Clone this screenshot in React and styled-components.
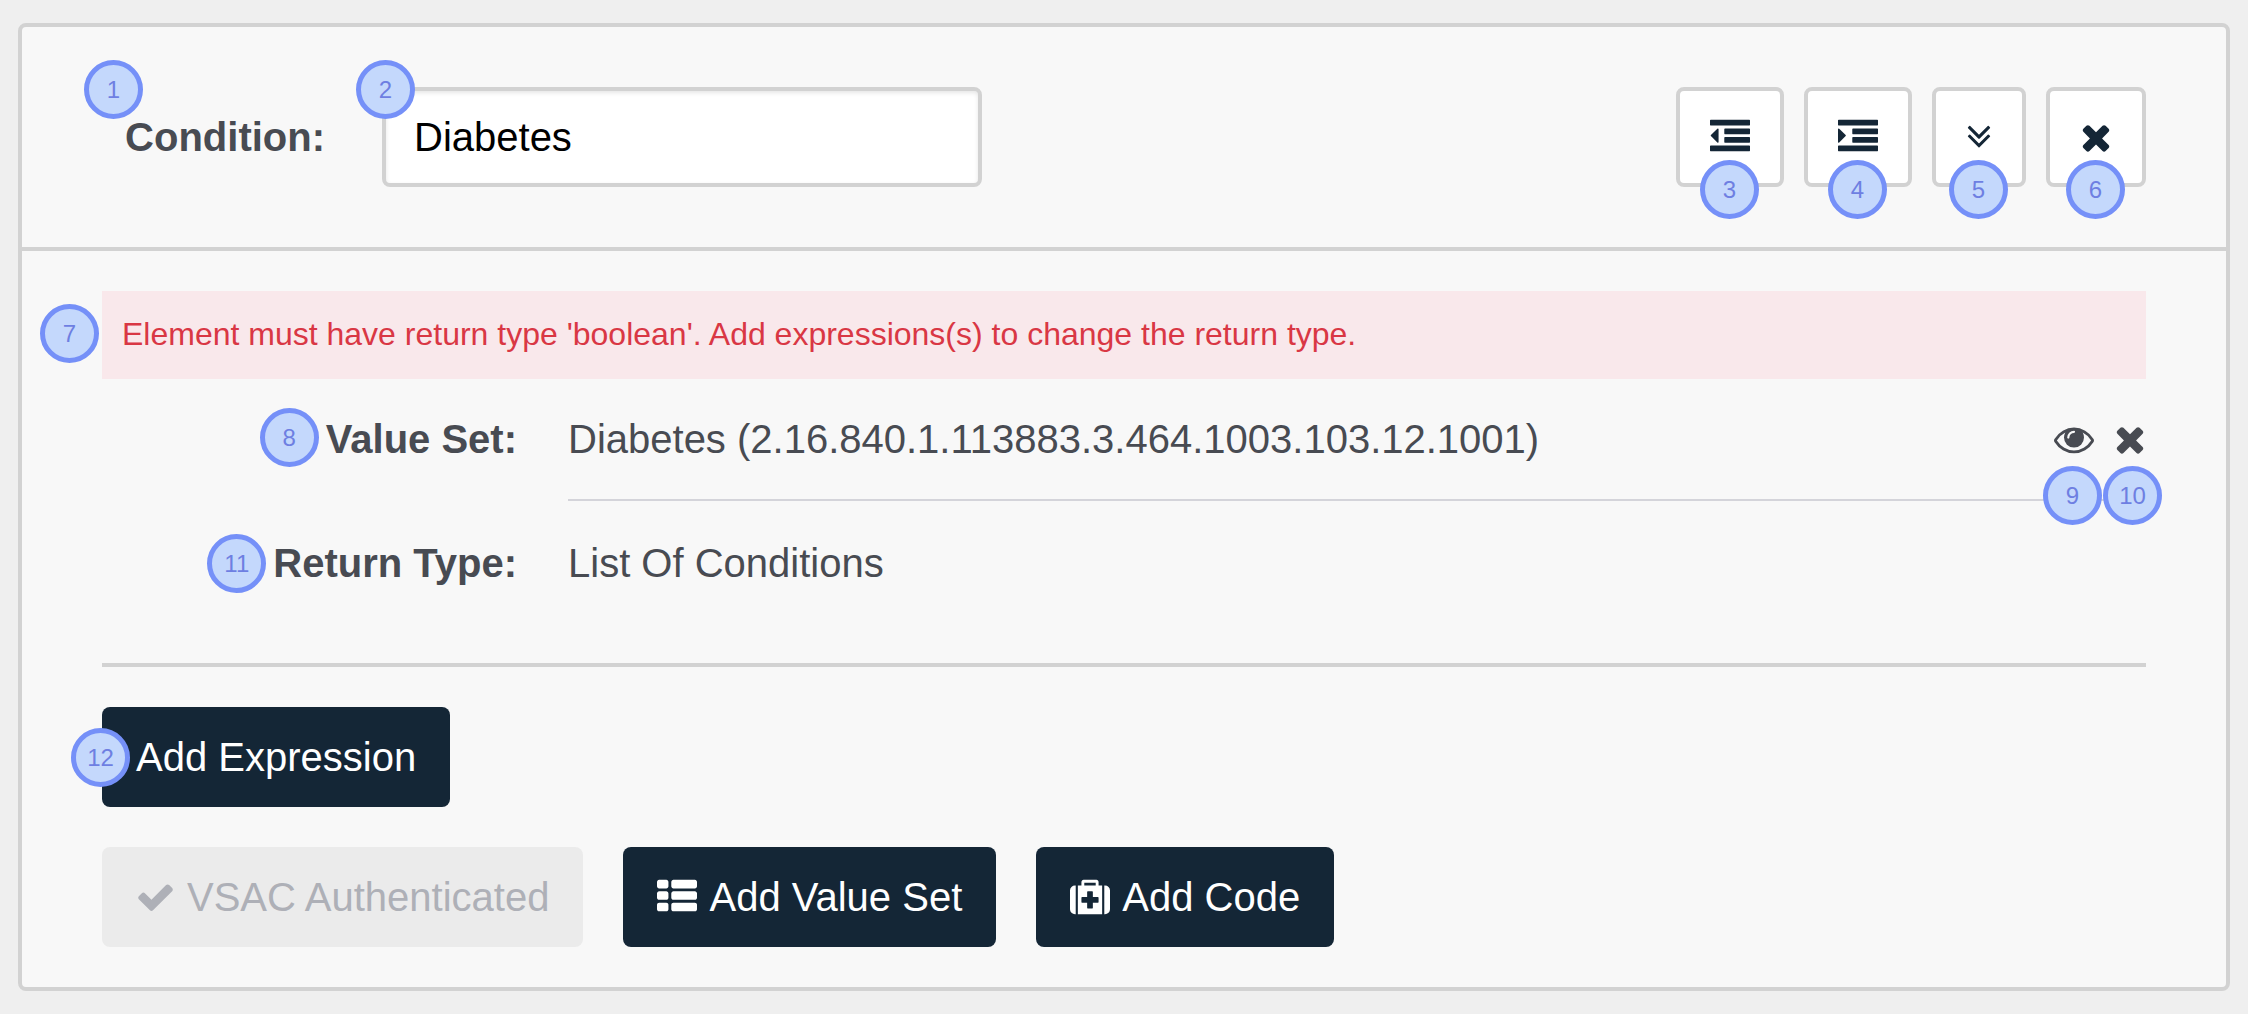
import React, { useState } from "react";
import styled, { createGlobalStyle } from "styled-components";

const color = {
  page: "#efefef",
  card: "#f8f8f8",
  line: "#d2d2d2",
  hairline: "#d4d4da",
  text: "#484b52",
  dark: "#142636",
  danger: "#d93744",
  dangerSoft: "#f9e8eb",
  disabled: "#ebebeb",
  disabledText: "#aeb0b7",
};

const GlobalStyle = createGlobalStyle`
  *, *::before, *::after { box-sizing: border-box; }
  body {
    margin: 0;
    background: ${color.page};
    color: ${color.text};
    font-family: "Liberation Sans", Arial, Helvetica, sans-serif;
    font-size: 40px;
    line-height: 46px;
  }
`;

const Page = styled.main`
  padding: 23px 18px;
`;

const Card = styled.section`
  background: ${color.card};
  border: 4px solid ${color.line};
  border-radius: 8px;
`;

const CardHeader = styled.header`
  display: flex;
  align-items: center;
  justify-content: space-between;
  gap: 40px;
  padding: 60px 80px;
  border-bottom: 4px solid ${color.line};
`;

const NameField = styled.div`
  display: flex;
  align-items: center;
  gap: 57px;
`;

const NameLabelCell = styled.div`
  position: relative;
  display: flex;
  align-items: center;
  justify-content: flex-end;
  width: 223px;
  height: 100px;
  font-weight: bold;
`;

const NameInput = styled.input`
  display: block;
  width: 600px;
  height: 100px;
  padding: 0 28px;
  border: 4px solid ${color.line};
  border-radius: 8px;
  background: #fff;
  box-shadow: inset 0 2px 4px rgba(0, 0, 0, 0.1);
  color: #000;
  font: inherit;
`;

const Toolbar = styled.div`
  display: flex;
  gap: 20px;
`;

const Spot = styled.div`
  position: relative;
  display: flex;
`;

const Badge = styled.span`
  position: absolute;
  left: ${(p) => p.$x};
  top: ${(p) => p.$y};
  z-index: 1;
  display: flex;
  align-items: center;
  justify-content: center;
  width: 59px;
  height: 59px;
  margin: -29px 0 0 -30px;
  border: 5px solid #7590f8;
  border-radius: 50%;
  background: #c4d8fc;
  color: #6e7fe2;
  font-size: 24px;
  font-weight: normal;
  line-height: 28px;
  pointer-events: none;
`;

const ToolButton = styled.button`
  display: flex;
  align-items: center;
  justify-content: center;
  height: 100px;
  padding: 0 30px;
  border: 4px solid ${color.line};
  border-radius: 8px;
  background: #fff;
  color: ${color.dark};
  cursor: pointer;
`;

const PlainButton = styled.button`
  display: flex;
  padding: 0;
  border: 0;
  background: none;
  color: inherit;
  cursor: pointer;
`;

const CardBody = styled.div`
  padding: 40px 80px;
`;

const Alert = styled.div`
  position: relative;
  padding: 25px 20px 27px;
  background: ${color.dangerSoft};
  color: ${color.danger};
  font-size: 32px;
  line-height: 36px;
`;

const Details = styled.dl`
  display: grid;
  grid-template-columns: 415px 1fr;
  column-gap: 51px;
  row-gap: 4px;
  margin: 0 0 40px;
`;

const Term = styled.dt`
  display: flex;
  justify-content: flex-end;
  padding: 37px 0;
  font-weight: bold;
`;

const Value = styled.dd`
  display: flex;
  align-items: center;
  justify-content: space-between;
  margin: 0;
  padding: 37px 0;
  box-shadow: ${(p) => (p.$ruled ? `0 2px 0 ${color.hairline}` : "none")};
`;

const ValueActions = styled.div`
  display: flex;
  gap: 20px;
`;

const Divider = styled.hr`
  height: 4px;
  margin: 0 0 40px;
  border: 0;
  background: ${color.line};
`;

const Actions = styled.div`
  display: flex;
  flex-wrap: wrap;
  gap: 40px;

  & + & {
    margin-top: 40px;
  }
`;

const ActionButton = styled.button`
  display: flex;
  align-items: center;
  gap: 12px;
  height: 100px;
  padding: 0 34px;
  border: 0;
  border-radius: 8px;
  background: ${color.dark};
  color: #fff;
  font: inherit;
  cursor: pointer;

  &:disabled {
    background: ${color.disabled};
    color: ${color.disabledText};
    cursor: default;
  }
`;

const Glyph = styled.svg`
  display: block;
  flex: none;
  height: 40px;
  width: ${(p) => p.$w}px;
  fill: currentColor;
`;

const bar =
  "v192q0 13-9.5 22.5t-22.5 9.5h-1728q-13 0-22.5-9.5t-9.5-22.5v-192q0-13 9.5-22.5t22.5-9.5h1728q13 0 22.5 9.5t9.5 22.5z";
const shortBar =
  "v192q0 13-9.5 22.5t-22.5 9.5h-1088q-13 0-22.5-9.5t-9.5-22.5v-192q0-13 9.5-22.5t22.5-9.5h1088q13 0 22.5 9.5t9.5 22.5z";
const bars = `M1792 1312${bar}M1792 928${shortBar}M1792 544${shortBar}M1792 160${bar}`;
const chevron =
  "q0 13-10 23l-466 466q-10 10-23 10t-23-10l-466-466q-10-10-10-23t10-23l50-50q10-10 23-10t23 10l393 393 393-393q10-10 23-10t23 10l50 50q10 10 10 23z";

const icons = {
  outdent: {
    w: 40,
    box: "0 0 1792 1792",
    d: `M384 544v576q0 13-9.5 22.5t-22.5 9.5q-14 0-23-9l-288-288q-9-9-9-23t9-23l288-288q9-9 23-9 13 0 22.5 9.5t9.5 22.5z${bars}`,
  },
  indent: {
    w: 40,
    box: "0 0 1792 1792",
    d: `M352 832q0 14-9 23l-288 288q-9 9-23 9-13 0-22.5-9.5t-9.5-22.5v-576q0-13 9.5-22.5t22.5-9.5q14 0 23 9l288 288q9 9 9 23z${bars}`,
  },
  collapse: {
    w: 26,
    box: "314 0 1164 1792",
    d: `M1395 864${chevron}M1395 480${chevron}`,
  },
  times: {
    w: 32,
    box: "179 0 1434 1792",
    d: "M1490 1322q0 40-28 68l-136 136q-28 28-68 28t-68-28l-294-294-294 294q-28 28-68 28t-68-28l-136-136q-28-28-28-68t28-68l294-294-294-294q-28-28-28-68t28-68l136-136q28-28 68-28t68 28l294 294 294-294q28-28 68-28t68 28l136 136q28 28 28 68t-28 68l-294 294 294 294q28 28 28 68z",
  },
  eye: {
    w: 40,
    box: "0 0 1792 1792",
    d: "M1664 960q-152-236-381-353 61 104 61 225 0 185-131.5 316.5t-316.5 131.5-316.5-131.5-131.5-316.5q0-121 61-225-229 117-381 353 133 205 333.5 326.5t434.5 121.5 434.5-121.5 333.5-326.5zm-720-384q0-20-14-34t-34-14q-125 0-214.5 89.5t-89.5 214.5q0 20 14 34t34 14 34-14 14-34q0-86 61-147t147-61q20 0 34-14t14-34zm848 384q0 34-20 69-140 230-376.5 368.5t-499.5 138.5-499.5-139-376.5-368q-20-35-20-69t20-69q140-229 376.5-368t499.5-139 499.5 139 376.5 368q20 35 20 69z",
  },
  check: {
    w: 39,
    box: "22 0 1748 1792",
    d: "M1671 566q0 40-28 68l-724 724-136 136q-28 28-68 28t-68-28l-136-136-362-362q-28-28-28-68t28-68l136-136q28-28 68-28t68 28l294 295 656-657q28-28 68-28t68 28l136 136q28 28 28 68z",
  },
  list: {
    w: 40,
    box: "0 0 1792 1792",
    d: "M512 1248v192q0 40-28 68t-68 28h-320q-40 0-68-28t-28-68v-192q0-40 28-68t68-28h320q40 0 68 28t28 68zm0-512v192q0 40-28 68t-68 28h-320q-40 0-68-28t-28-68v-192q0-40 28-68t68-28h320q40 0 68 28t28 68zm1280 512v192q0 40-28 68t-68 28h-960q-40 0-68-28t-28-68v-192q0-40 28-68t68-28h960q40 0 68 28t28 68zm-1280-1024v192q0 40-28 68t-68 28h-320q-40 0-68-28t-28-68v-192q0-40 28-68t68-28h320q40 0 68 28t28 68zm1280 512v192q0 40-28 68t-68 28h-960q-40 0-68-28t-28-68v-192q0-40 28-68t68-28h960q40 0 68 28t28 68zm0-512v192q0 40-28 68t-68 28h-960q-40 0-68-28t-28-68v-192q0-40 28-68t68-28h960q40 0 68 28t28 68z",
  },
  medkit: {
    w: 40,
    box: "0 0 1792 1792",
    d: "M1280 1120v-192q0-14-9-23t-23-9h-224v-224q0-14-9-23t-23-9h-192q-14 0-23 9t-9 23v224h-224q-14 0-23 9t-9 23v192q0 14 9 23t23 9h224v224q0 14 9 23t23 9h192q14 0 23-9t9-23v-224h224q14 0 23-9t9-23zm-640-736h512v-128h-512v128zm-384 0v1280h-32q-92 0-158-66t-66-158v-832q0-92 66-158t158-66h32zm1184 0v1280h-1088v-1280h160v-160q0-40 28-68t68-28h576q40 0 68 28t28 68v160h160zm352 224v832q0 92-66 158t-158 66h-32v-1280h32q92 0 158 66t66 158z",
  },
};

function Icon({ name }) {
  const { w, box, d } = icons[name];
  return (
    <Glyph $w={w} viewBox={box} aria-hidden="true">
      <path d={d} />
    </Glyph>
  );
}

const tools = [
  { icon: "outdent", label: "Outdent", step: 3 },
  { icon: "indent", label: "Indent", step: 4 },
  { icon: "collapse", label: "Collapse", step: 5 },
  { icon: "times", label: "Remove condition", step: 6 },
];

export default function App() {
  const [name, setName] = useState("Diabetes");

  return (
    <>
      <GlobalStyle />
      <Page>
        <Card>
          <CardHeader>
            <NameField>
              <NameLabelCell>
                <label htmlFor="condition-name">Condition:</label>
                <Badge $x="12px" $y="2px">1</Badge>
              </NameLabelCell>
              <Spot>
                <NameInput
                  id="condition-name"
                  type="text"
                  value={name}
                  onChange={(e) => setName(e.target.value)}
                />
                <Badge $x="4px" $y="2px">2</Badge>
              </Spot>
            </NameField>
            <Toolbar>
              {tools.map(({ icon, label, step }) => (
                <Spot key={icon}>
                  <ToolButton type="button" aria-label={label}>
                    <Icon name={icon} />
                  </ToolButton>
                  <Badge $x="50%" $y="calc(100% + 2px)">{step}</Badge>
                </Spot>
              ))}
            </Toolbar>
          </CardHeader>

          <CardBody>
            <Alert role="alert">
              Element must have return type 'boolean'. Add expressions(s) to change the return type.
              <Badge $x="-32px" $y="42px">7</Badge>
            </Alert>

            <Details>
              <Term>
                <Spot>
                  Value Set:
                  <Badge $x="-36px" $y="calc(50% - 2px)">8</Badge>
                </Spot>
              </Term>
              <Value $ruled>
                Diabetes (2.16.840.1.113883.3.464.1003.103.12.1001)
                <ValueActions>
                  <Spot>
                    <PlainButton type="button" aria-label="View value set">
                      <Icon name="eye" />
                    </PlainButton>
                    <Badge $x="calc(50% - 1px)" $y="calc(100% + 36px)">9</Badge>
                  </Spot>
                  <Spot>
                    <PlainButton type="button" aria-label="Remove value set">
                      <Icon name="times" />
                    </PlainButton>
                    <Badge $x="calc(50% + 3px)" $y="calc(100% + 36px)">10</Badge>
                  </Spot>
                </ValueActions>
              </Value>
              <Term>
                <Spot>
                  Return Type:
                  <Badge $x="-36px" $y="50%">11</Badge>
                </Spot>
              </Term>
              <Value>List Of Conditions</Value>
            </Details>

            <Divider />

            <Actions>
              <Spot>
                <ActionButton type="button">Add Expression</ActionButton>
                <Badge $x="-1px" $y="50%">12</Badge>
              </Spot>
            </Actions>
            <Actions>
              <ActionButton type="button" disabled>
                <Icon name="check" />
                VSAC Authenticated
              </ActionButton>
              <ActionButton type="button">
                <Icon name="list" />
                Add Value Set
              </ActionButton>
              <ActionButton type="button">
                <Icon name="medkit" />
                Add Code
              </ActionButton>
            </Actions>
          </CardBody>
        </Card>
      </Page>
    </>
  );
}
